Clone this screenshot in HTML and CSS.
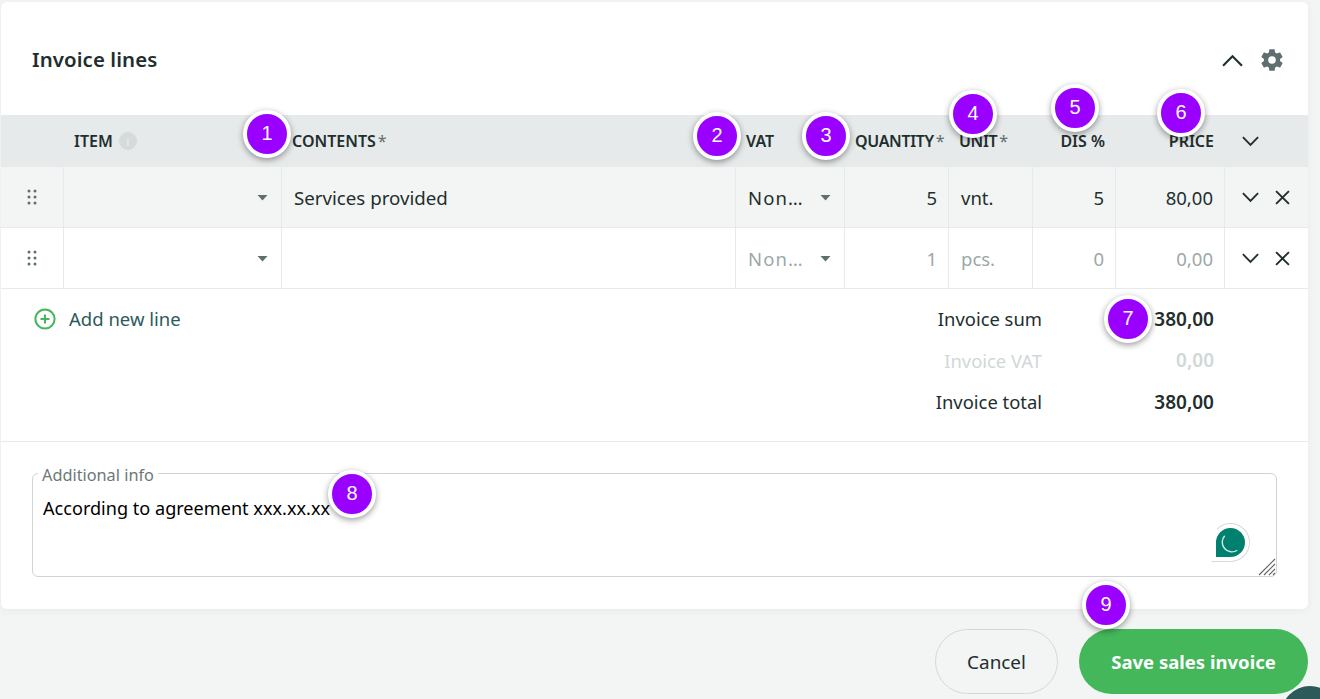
FILE: index.html
```html
<!DOCTYPE html>
<html lang="en">
<head>
  <meta charset="UTF-8">
  <meta name="viewport" content="width=device-width, initial-scale=1.0">
  <title>Invoice lines</title>
  <link rel="stylesheet" href="styles.css">
</head>
<body>
  <svg class="icon-sprite" width="0" height="0">
    <symbol id="chev-down" viewBox="0 0 20 12"><path d="M2 2l8 8 8-8" fill="none" stroke="currentColor" stroke-width="2"/></symbol>
    <symbol id="close" viewBox="0 0 14 14"><path d="M1 1l12 12M13 1L1 13" fill="none" stroke="currentColor" stroke-width="1.8"/></symbol>
    <symbol id="drag" viewBox="0 0 10 16"><g fill="currentColor"><circle cx="2" cy="2" r="1.5"/><circle cx="8" cy="2" r="1.5"/><circle cx="2" cy="8" r="1.5"/><circle cx="8" cy="8" r="1.5"/><circle cx="2" cy="14" r="1.5"/><circle cx="8" cy="14" r="1.5"/></g></symbol>
    <symbol id="caret" viewBox="0 0 10 6"><path d="M0 0h10L5 5.5z" fill="currentColor"/></symbol>
  </svg>

  <div class="card">
    <div class="card-head">
      <h2>Invoice lines</h2>
      <div class="head-actions">
        <svg class="chev-up" viewBox="0 0 20 12"><path d="M1 11l9-9 9 9" fill="none" stroke="currentColor" stroke-width="2"/></svg>
        <svg class="gear" viewBox="0 0 24 24"><path fill="currentColor" fill-rule="evenodd" d="M19.4 13c.04-.33.06-.66.06-1s-.02-.67-.06-1l2.11-1.65c.19-.15.24-.42.12-.64l-2-3.46c-.12-.22-.39-.3-.61-.22l-2.49 1c-.52-.4-1.08-.73-1.69-.98l-.38-2.65A.49.49 0 0 0 14 2h-4c-.25 0-.46.18-.49.42l-.38 2.65c-.61.25-1.17.59-1.69.98l-2.49-1c-.23-.09-.49 0-.61.22l-2 3.46c-.13.22-.07.49.12.64L4.57 11c-.04.33-.07.67-.07 1s.03.67.07 1l-2.11 1.65c-.19.15-.24.42-.12.64l2 3.46c.12.22.39.3.61.22l2.49-1c.52.4 1.08.73 1.69.98l.38 2.65c.03.24.24.42.49.42h4c.25 0 .46-.18.49-.42l.38-2.65c.61-.25 1.17-.59 1.69-.98l2.49 1c.23.09.49 0 .61-.22l2-3.46c.12-.22.07-.49-.12-.64L19.4 13zM12 15.5a3.5 3.5 0 1 1 0-7 3.5 3.5 0 0 1 0 7z"/></svg>
      </div>
    </div>

    <div class="line-row line-header">
      <div class="cell"></div>
      <div class="cell cell-item">ITEM <span class="info-dot">i</span></div>
      <div class="cell">CONTENTS<span class="req">*</span></div>
      <div class="cell">VAT</div>
      <div class="cell cell-tight">QUANTITY<span class="req">*</span></div>
      <div class="cell cell-tight">UNIT<span class="req">*</span></div>
      <div class="cell cell-right">DIS %</div>
      <div class="cell cell-right">PRICE</div>
      <div class="cell cell-actions"><svg class="chev"><use href="#chev-down"/></svg></div>
    </div>

    <div class="line-row line-filled">
      <div class="cell cell-drag"><svg class="drag"><use href="#drag"/></svg></div>
      <div class="cell cell-select"><svg class="caret"><use href="#caret"/></svg></div>
      <div class="cell cell-contents">Services provided</div>
      <div class="cell cell-select"><span class="vat-text">Non…</span><svg class="caret"><use href="#caret"/></svg></div>
      <div class="cell cell-right">5</div>
      <div class="cell">vnt.</div>
      <div class="cell cell-right">5</div>
      <div class="cell cell-right">80,00</div>
      <div class="cell cell-actions"><svg class="chev"><use href="#chev-down"/></svg><svg class="close"><use href="#close"/></svg></div>
    </div>

    <div class="line-row line-empty">
      <div class="cell cell-drag"><svg class="drag"><use href="#drag"/></svg></div>
      <div class="cell cell-select"><svg class="caret"><use href="#caret"/></svg></div>
      <div class="cell"></div>
      <div class="cell cell-select"><span class="vat-text">Non…</span><svg class="caret"><use href="#caret"/></svg></div>
      <div class="cell cell-right">1</div>
      <div class="cell">pcs.</div>
      <div class="cell cell-right">0</div>
      <div class="cell cell-right">0,00</div>
      <div class="cell cell-actions"><svg class="chev"><use href="#chev-down"/></svg><svg class="close"><use href="#close"/></svg></div>
    </div>

    <div class="summary">
      <a class="add-line">
        <svg class="plus" viewBox="0 0 22 22"><circle cx="11" cy="11" r="9.6" fill="none" stroke="currentColor" stroke-width="2"/><path d="M11 6.5v9M6.5 11h9" fill="none" stroke="currentColor" stroke-width="2"/></svg>
        <span class="add-text">Add new line</span>
      </a>
      <div class="totals">
        <div class="total-row"><span>Invoice sum</span><b>380,00</b></div>
        <div class="total-row total-muted"><span>Invoice VAT</span><b>0,00</b></div>
        <div class="total-row"><span>Invoice total</span><b>380,00</b></div>
      </div>
    </div>

    <div class="info-section">
      <div class="info-box">
        <span class="info-label">Additional info</span>
        <div class="info-text">According to agreement xxx.xx.xx</div>
        <div class="info-widget"><span class="widget-ball"><svg viewBox="0 0 30 30"><path d="M9 8a10 10 0 0 0 13 15" fill="none" stroke="#d5e6e2" stroke-width="1.5"/></svg></span></div>
        <svg class="resize-grip" viewBox="0 0 18 18"><path d="M1 17L17 1M6 17L17 6M11 17l6-6M15 17l2-2" stroke="#666" stroke-width="1.2" fill="none"/></svg>
      </div>
    </div>
  </div>

  <div class="page-actions">
    <button class="btn btn-cancel">Cancel</button>
    <button class="btn btn-save">Save sales invoice</button>
  </div>

  <div class="chat-bubble"></div>

  <div class="marker m1">1</div>
  <div class="marker m2">2</div>
  <div class="marker m3">3</div>
  <div class="marker m4">4</div>
  <div class="marker m5">5</div>
  <div class="marker m6">6</div>
  <div class="marker m7">7</div>
  <div class="marker m8">8</div>
  <div class="marker m9">9</div>
</body>
</html>
```

FILE: styles.css
```css
html {
  height: 699px;
  overflow: hidden;
}
body {
  margin: 0;
  padding: 2px 12px 0 1px;
  box-sizing: border-box;
  height: 699px;
  overflow: hidden;
  position: relative;
  background-color: #f3f5f4;
  font-family: "Noto Sans", sans-serif;
  font-size: 18.5px;
  color: #222e2e;
}
.icon-sprite {
  position: absolute;
}
.card {
  background-color: #fff;
  border-radius: 6px;
  height: 607px;
  box-shadow: 0 2px 8px rgba(40, 60, 60, 0.05);
}
.card-head {
  height: 113px;
  display: flex;
  justify-content: space-between;
  align-items: flex-start;
  padding: 0 23px 0 31px;
}
h2 {
  margin: 41px 0 0;
  font-size: 20.4px;
  line-height: 32px;
  font-weight: 600;
  letter-spacing: 0.1px;
}
.head-actions {
  display: flex;
  align-items: center;
  gap: 16px;
  margin-top: 45px;
}
.chev-up {
  width: 21px;
  height: 13px;
  color: #222e2e;
}
.gear {
  width: 26px;
  height: 26px;
  color: #5f6f6f;
}

.line-row {
  display: grid;
  grid-template-columns: 63px 218px 454px 109px 104px 84px 83px 109px 83px;
  height: 61px;
  border-bottom: 1px solid #e6eaea;
  box-sizing: border-box;
}
.cell {
  display: flex;
  align-items: center;
  padding: 1px 12px 0;
  border-right: 1px solid #e6eaea;
  box-sizing: border-box;
  white-space: nowrap;
  min-width: 0;
}
.cell:last-child {
  border-right: none;
}
.line-header {
  height: 52px;
  background-color: #e6eaea;
  font-size: 16px;
  font-weight: 600;
  border-bottom: none;
}
.line-header .cell {
  border-right: none;
  padding: 0 10px;
}
.line-header .cell-right {
  justify-content: flex-end;
  padding-right: 11px;
}
.line-header .cell-item {
  gap: 6px;
}
.line-header .cell-actions {
  padding-left: 16px;
}
.cell-tight {
  letter-spacing: -0.35px;
}
.cell-contents {
  font-size: 18.7px;
}
.req {
  font-weight: 400;
  margin-left: 2px;
  color: #5f6f6f;
}
.info-dot {
  width: 18px;
  height: 18px;
  border-radius: 50%;
  background-color: #d5dbdb;
  color: #e6eaea;
  font-size: 11px;
  display: flex;
  align-items: center;
  justify-content: center;
}
.line-filled {
  background-color: #f3f5f4;
}
.line-empty {
  color: #9ba8a8;
}
.cell-right {
  justify-content: flex-end;
  padding-right: 11px;
}
.cell-drag {
  justify-content: center;
  padding: 0;
}
.cell-select {
  justify-content: space-between;
  padding-right: 13px;
}
.vat-text {
  letter-spacing: 1.1px;
}
.drag {
  width: 10px;
  height: 16px;
  color: #5f6f6f;
}
.caret {
  width: 11px;
  height: 6px;
  color: #5f6f6f;
  margin-left: auto;
}
.cell-actions {
  padding: 0 0 0 16px;
  gap: 15px;
  color: #222e2e;
}
.chev {
  width: 19px;
  height: 12px;
}
.close {
  width: 15px;
  height: 15px;
}

.summary {
  height: 153px;
  display: flex;
  justify-content: space-between;
  border-bottom: 1px solid #e6eaea;
  box-sizing: border-box;
  padding: 9px 94px 0 33px;
}
.add-line {
  display: flex;
  align-items: center;
  gap: 13px;
  height: 42px;
  color: #2c5a5a;
}
.add-text {
  margin-top: -2px;
}
.plus {
  width: 22px;
  height: 22px;
  color: #43b75a;
}
.totals {
  width: 320px;
  font-size: 18.4px;
}
.total-row {
  display: grid;
  grid-template-columns: 1fr 172px;
  height: 41.5px;
  align-items: center;
  text-align: right;
}
.total-row b {
  font-size: 19px;
  font-weight: 600;
}
.total-muted {
  color: #d0d8d8;
}

.info-section {
  padding: 31px 31px 0;
}
.info-box {
  position: relative;
  padding: 21px 10px 0;
  height: 104px;
  box-sizing: border-box;
  border: 1px solid #cdd5d5;
  border-radius: 6px;
  color: #000;
  font-size: 18.1px;
}
.info-label {
  position: absolute;
  left: 5px;
  top: -9px;
  padding: 0 4px;
  background-color: #fff;
  font-size: 16.3px;
  line-height: 20px;
  color: #6b7878;
}
.info-text {
  line-height: 26px;
}
.info-widget {
  position: absolute;
  right: 26px;
  bottom: 14px;
  width: 39px;
  height: 39px;
  border-radius: 50% 50% 50% 0;
  border: 1px solid #d5dbe0;
  border-left-color: transparent;
  box-sizing: border-box;
  display: flex;
  align-items: center;
  justify-content: center;
}
.widget-ball {
  display: block;
  width: 29px;
  height: 29px;
  border-radius: 50% 50% 50% 0;
  background-color: #00806e;
}
.widget-ball svg {
  display: block;
  width: 29px;
  height: 29px;
}
.resize-grip {
  position: absolute;
  right: 0;
  bottom: 0;
  width: 18px;
  height: 18px;
}

.page-actions {
  display: flex;
  justify-content: flex-end;
  gap: 21px;
  margin-top: 20px;
}
.btn {
  height: 65px;
  border-radius: 33px;
  font-family: inherit;
  box-sizing: border-box;
}
.btn-cancel {
  width: 123px;
  background-color: transparent;
  border: 1px solid #d3d9d9;
  color: #222e2e;
  font-size: 18.9px;
}
.btn-save {
  width: 229px;
  background-color: #43b75a;
  border: none;
  color: #fff;
  font-size: 18.5px;
  font-weight: 700;
}
.chat-bubble {
  position: absolute;
  left: 1281px;
  top: 686px;
  width: 39px;
  height: 13px;
  overflow: hidden;
}
.chat-bubble::before {
  content: "";
  display: block;
  width: 58px;
  height: 58px;
  border-radius: 50%;
  background-color: #2c5a5a;
}

.marker {
  position: absolute;
  width: 40px;
  height: 40px;
  margin: -24px 0 0 -24px;
  border: 4px solid #fff;
  border-radius: 50%;
  background-color: #9900ff;
  color: #fff;
  font-family: "Liberation Sans", Arial, sans-serif;
  font-size: 20px;
  line-height: 38px;
  text-align: center;
  box-shadow: 0 2px 6px rgba(0, 0, 0, 0.4);
}
.m1 { left: 267px; top: 134px; }
.m2 { left: 717px; top: 136px; }
.m3 { left: 826px; top: 136px; }
.m4 { left: 973px; top: 114px; }
.m5 { left: 1075px; top: 108px; }
.m6 { left: 1181px; top: 113px; }
.m7 { left: 1128px; top: 319px; }
.m8 { left: 352px; top: 494px; }
.m9 { left: 1106px; top: 605px; }
```
